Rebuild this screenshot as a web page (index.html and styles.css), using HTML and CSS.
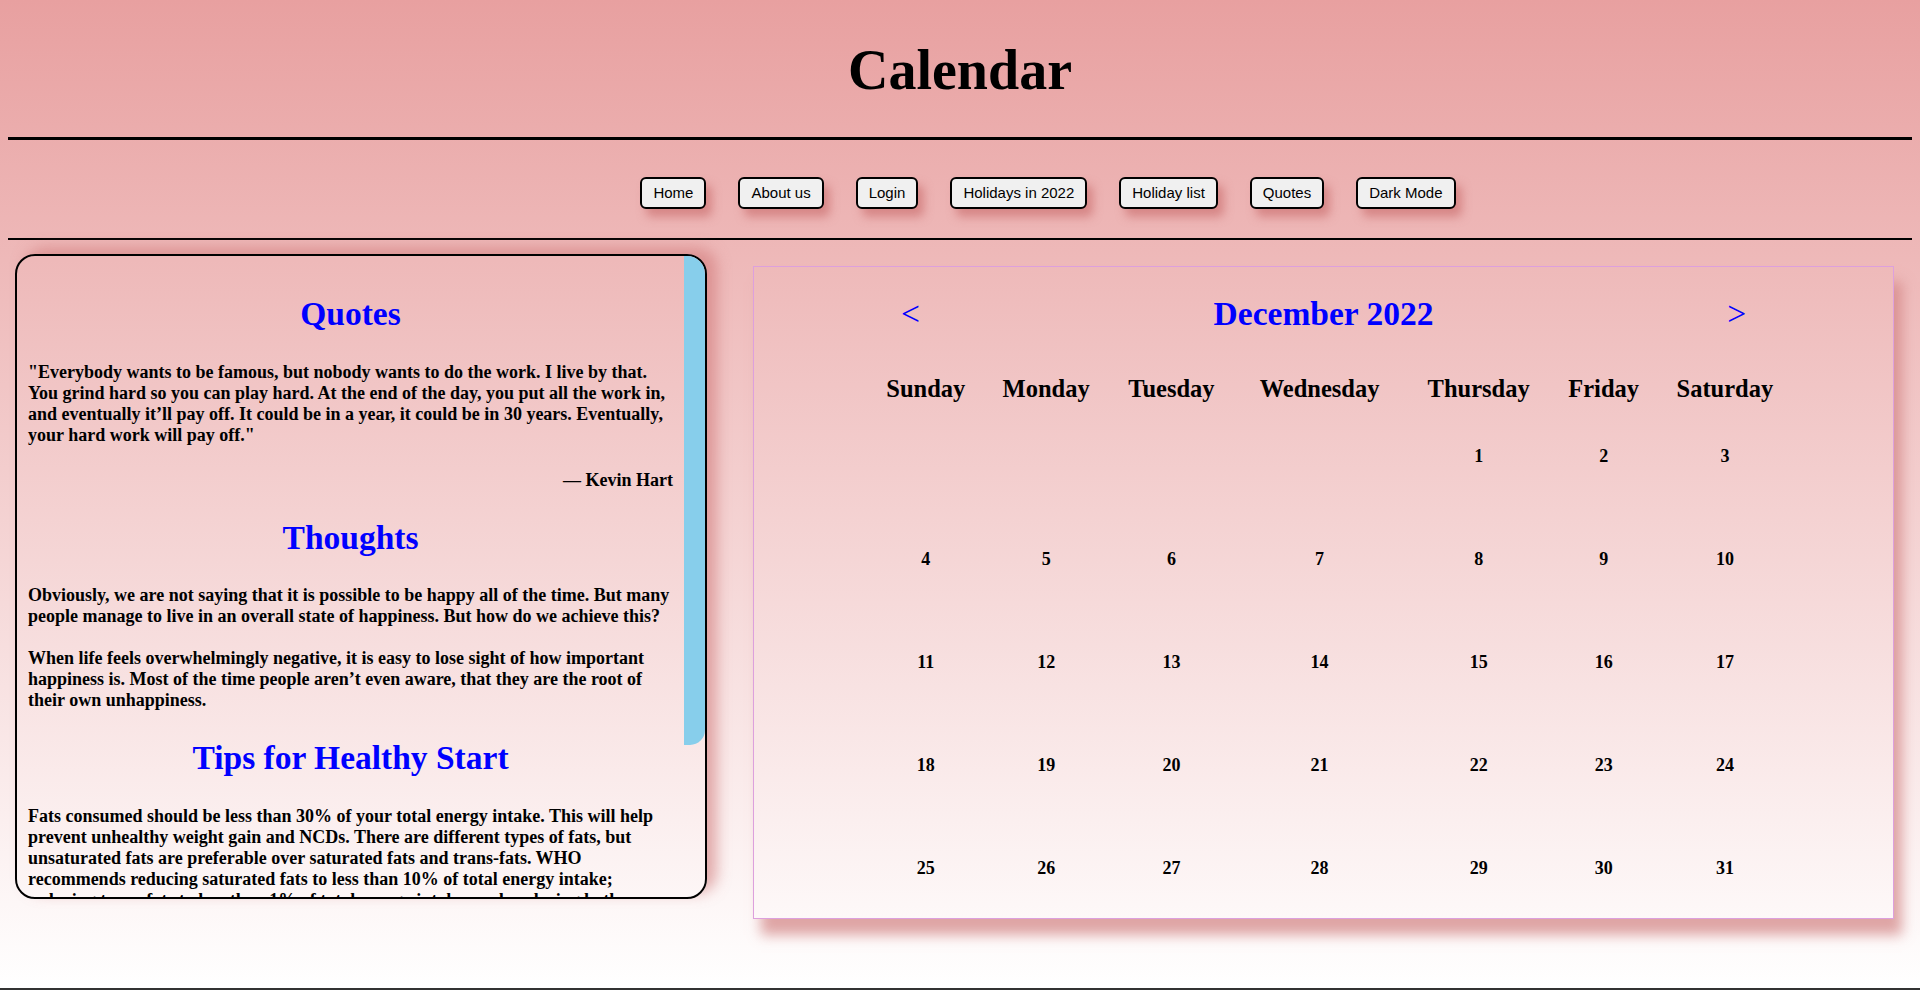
FILE: index.html
```html
<!DOCTYPE html>
<html lang="en">
<head>
<meta charset="utf-8">
<title>Calendar</title>
<link rel="stylesheet" href="styles.css">
</head>
<body>
<div class="page">
  <header class="site-header">
    <h1 class="site-title">Calendar</h1>
  </header>
  <nav class="site-nav">
    <button class="nav-btn">Home</button>
    <button class="nav-btn">About us</button>
    <button class="nav-btn">Login</button>
    <button class="nav-btn">Holidays in 2022</button>
    <button class="nav-btn">Holiday list</button>
    <button class="nav-btn">Quotes</button>
    <button class="nav-btn">Dark Mode</button>
  </nav>
  <main class="content">
    <section class="info-card">
      <div class="info-scroll">
        <h2 class="info-title">Quotes</h2>
        <p class="info-text">"Everybody wants to be famous, but nobody wants to do the work. I live by that. You grind hard so you can play hard. At the end of the day, you put all the work in, and eventually it’ll pay off. It could be in a year, it could be in 30 years. Eventually, your hard work will pay off."</p>
        <p class="info-author">— Kevin Hart</p>
        <h2 class="info-title">Thoughts</h2>
        <p class="info-text">Obviously, we are not saying that it is possible to be happy all of the time. But many people manage to live in an overall state of happiness. But how do we achieve this?<br><br>When life feels overwhelmingly negative, it is easy to lose sight of how important happiness is. Most of the time people aren’t even aware, that they are the root of their own unhappiness.</p>
        <h2 class="info-title">Tips for Healthy Start</h2>
        <p class="info-text">Fats consumed should be less than 30% of your total energy intake. This will help prevent unhealthy weight gain and NCDs. There are different types of fats, but unsaturated fats are preferable over saturated fats and trans-fats. WHO recommends reducing saturated fats to less than 10% of total energy intake; reducing trans-fats to less than 1% of total energy intake; and replacing both saturated fats and trans-fats to unsaturated fats.</p>
        <p class="info-text">Keeping salt intake to less than 5g per day helps to prevent hypertension, and reduces the risk of heart disease and stroke in the adult population.</p>
      </div>
      <div class="info-scrollbar" aria-hidden="true">
        <div class="info-thumb"></div>
      </div>
    </section>
    <section class="calendar">
      <div class="cal-head">
        <span class="cal-arrow">&lt;</span>
        <h2 class="cal-month">December 2022</h2>
        <span class="cal-arrow">&gt;</span>
      </div>
      <div class="cal-body">
        <table class="cal-table">
          <thead>
            <tr><th>Sunday</th><th>Monday</th><th>Tuesday</th><th>Wednesday</th><th>Thursday</th><th>Friday</th><th>Saturday</th></tr>
          </thead>
          <tbody>
            <tr><td></td><td></td><td></td><td></td><td>1</td><td>2</td><td>3</td></tr>
            <tr><td>4</td><td>5</td><td>6</td><td>7</td><td>8</td><td>9</td><td>10</td></tr>
            <tr><td>11</td><td>12</td><td>13</td><td>14</td><td>15</td><td>16</td><td>17</td></tr>
            <tr><td>18</td><td>19</td><td>20</td><td>21</td><td>22</td><td>23</td><td>24</td></tr>
            <tr><td>25</td><td>26</td><td>27</td><td>28</td><td>29</td><td>30</td><td>31</td></tr>
          </tbody>
        </table>
      </div>
    </section>
  </main>
</div>
<footer class="site-footer"></footer>
</body>
</html>
```
FILE: styles.css
```css
html, body {
  margin: 0;
  padding: 0;
}

body {
  font-family: "Liberation Serif", "Times New Roman", serif;
  background: #333;
  color: #000;
}

.page {
  box-sizing: border-box;
  height: 988px;
  padding: 0 8px;
  background: linear-gradient(#e8a0a0, #ffffff);
  overflow: hidden;
}

.site-header {
  padding: 38px 0 35px;
  border-bottom: 3px solid #000;
  text-align: center;
}

.site-title {
  margin: 0;
  font-size: 56px;
  line-height: 64px;
  font-weight: bold;
}

.site-nav {
  display: flex;
  justify-content: center;
  gap: 32px;
  padding: 37px 0 29px 176px;
  border-bottom: 2px solid #000;
}

.nav-btn {
  font-family: "Liberation Sans", Arial, sans-serif;
  font-size: 15px;
  line-height: 18px;
  padding: 5px 11px;
  border: 2px solid #000;
  border-radius: 6px;
  background: #f0f0f0;
  color: #000;
  box-shadow: 6px 8px 10px rgba(200, 105, 105, 0.6);
}

.content {
  display: flex;
  align-items: flex-start;
  gap: 46px;
  padding: 14px 0 0 7px;
}

.info-card {
  box-sizing: border-box;
  flex: none;
  display: flex;
  width: 692px;
  height: 645px;
  border: 2px solid #000;
  border-radius: 20px;
  overflow: hidden;
  box-shadow: 10px -6px 14px rgba(205, 115, 115, 0.55);
}

.info-scroll {
  flex: 1;
  min-width: 0;
  overflow: hidden;
  padding: 11px;
}

.info-scrollbar {
  flex: none;
  width: 21px;
}

.info-thumb {
  height: 489px;
  background: #87ceeb;
  border-radius: 0 15px 15px 0;
}

.info-title {
  margin: 28px 0;
  font-size: 33.5px;
  line-height: 38.5px;
  color: #0000ff;
  text-align: center;
}

.info-text {
  margin: 18px 0;
  font-size: 18px;
  line-height: 21px;
  font-weight: bold;
}

.info-author {
  margin: 24px 0 18px;
  font-size: 18px;
  line-height: 21px;
  font-weight: bold;
  text-align: right;
}

.calendar {
  box-sizing: border-box;
  flex: none;
  width: 1141px;
  height: 653px;
  margin-top: 12px;
  border: 1px solid #dda0dd;
  box-shadow: 8px 16px 12px rgba(210, 130, 130, 0.7);
}

.cal-head {
  display: flex;
  justify-content: space-around;
  align-items: baseline;
  padding-top: 28px;
  margin-bottom: 38px;
  color: #0000ff;
  font-size: 33.5px;
  line-height: 38.5px;
}

.cal-arrow {
  font-weight: normal;
}

.cal-month {
  margin: 0;
  font-size: 33.5px;
  line-height: 38.5px;
  font-weight: bold;
}

.cal-body {
  padding-left: 16px;
}

.cal-table {
  width: 928px;
  margin: 0 auto;
  border-spacing: 2px;
}

.cal-table th {
  padding: 1px;
  font-size: 24.5px;
  font-weight: bold;
  text-align: center;
}

.cal-table td {
  height: 101px;
  padding: 0;
  font-size: 18px;
  font-weight: bold;
  text-align: center;
  vertical-align: middle;
}

.site-footer {
  height: 40px;
  background: #333;
}
```
